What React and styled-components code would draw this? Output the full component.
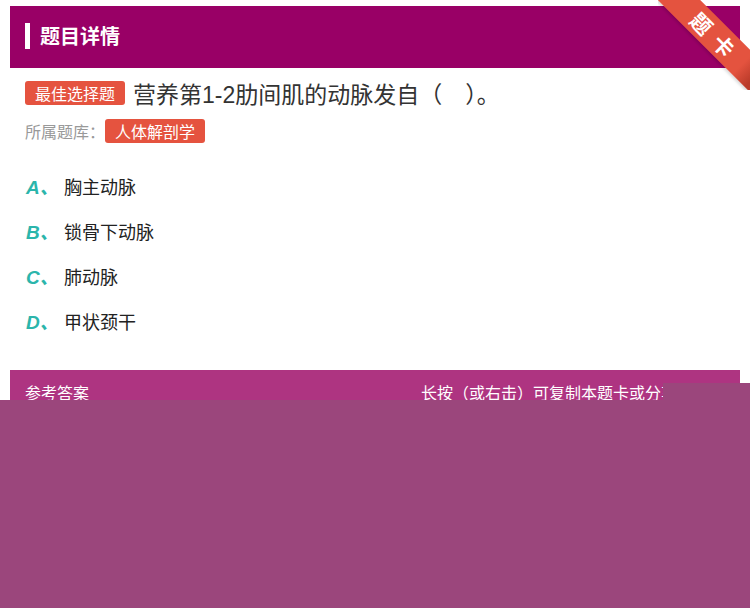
import styled, { createGlobalStyle } from "styled-components";

const GlobalStyle = createGlobalStyle`
  html, body {
    margin: 0;
    padding: 0;
    background: #fff;
  }
  body {
    font-family: "Liberation Sans", "Noto Sans CJK SC", sans-serif;
    color: #333;
  }
`;

const Page = styled.div`
  position: relative;
  width: 750px;
  height: 608px;
  overflow: hidden;
  padding: 6px 10px 0;
  box-sizing: border-box;
`;

const Header = styled.div`
  height: 62px;
  box-sizing: border-box;
  padding: 0 0 3px 15px;
  background: #990066;
  display: flex;
  align-items: center;
  & > h1 {
    margin: 0;
    font-size: 20px;
    font-weight: bold;
    color: #fff;
  }
`;

const Marker = styled.span`
  width: 5px;
  height: 26px;
  background: #fff;
  margin-right: 10px;
`;

const Ribbon = styled.div`
  position: absolute;
  top: 0;
  right: 0;
  width: 92px;
  height: 90px;
  overflow: hidden;
`;

const Band = styled.div`
  position: absolute;
  left: -20px;
  top: 19px;
  width: 150px;
  height: 30px;
  background: linear-gradient(to right, #e4533f 0%, #e4533f 78%, #b93a29 90%);
  transform: rotate(45deg);
  display: flex;
  align-items: center;
  justify-content: center;
  gap: 10px;
  color: #fff;
  font-size: 21px;
  font-weight: bold;
  box-shadow: 0 2px 3px rgba(0, 0, 0, 0.15);
`;

const Content = styled.div`
  padding: 0 15px;
`;

const QuestionRow = styled.div`
  display: flex;
  align-items: center;
  margin-top: 11px;
  height: 28px;
`;

const Tag = styled.span`
  display: inline-flex;
  align-items: center;
  height: 24px;
  padding: 0 10px;
  background: #e5533f;
  border-radius: 3px;
  color: #fff;
  font-size: 16px;
`;

const Question = styled.span`
  margin-left: 8px;
  font-size: 23px;
  color: #333;
`;

const LibraryRow = styled.div`
  display: flex;
  align-items: center;
  margin-top: 12px;
  font-size: 16px;
  color: #999;
`;

const Options = styled.div`
  margin-top: 20px;
`;

const Option = styled.div`
  display: flex;
  align-items: center;
  height: 45px;
`;

const Letter = styled.span`
  width: 38px;
  padding-left: 1px;
  color: #2bb5ab;
  font-size: 19px;
  font-weight: bold;
  font-style: italic;
`;

const OptionText = styled.span`
  font-size: 18px;
  color: #222;
`;

const AnswerBar = styled.div`
  margin-top: 27px;
  height: 44px;
  background: #ae3481;
  display: flex;
  align-items: center;
  justify-content: space-between;
  padding: 0 15px;
  color: #fff;
  font-size: 16px;
`;

const Shade = styled.div`
  position: absolute;
  left: 0;
  top: 400px;
  width: 750px;
  height: 208px;
  background: #9b467c;
  &::before {
    content: "";
    position: absolute;
    right: 0;
    top: -17px;
    width: 87px;
    height: 17px;
    background: #9b467c;
  }
`;

const options = [
  ["A", "胸主动脉"],
  ["B", "锁骨下动脉"],
  ["C", "肺动脉"],
  ["D", "甲状颈干"],
];

export default function App() {
  return (
    <>
      <GlobalStyle />
      <Page>
        <Header>
          <Marker />
          <h1>题目详情</h1>
        </Header>
        <Content>
          <QuestionRow>
            <Tag>最佳选择题</Tag>
            <Question>营养第1-2肋间肌的动脉发自（　）。</Question>
          </QuestionRow>
          <LibraryRow>
            所属题库：<Tag>人体解剖学</Tag>
          </LibraryRow>
          <Options>
            {options.map(([key, text]) => (
              <Option key={key}>
                <Letter>{key}、</Letter>
                <OptionText>{text}</OptionText>
              </Option>
            ))}
          </Options>
        </Content>
        <AnswerBar>
          <span>参考答案</span>
          <span>长按（或右击）可复制本题卡或分享给好友</span>
        </AnswerBar>
        <Ribbon>
          <Band>
            <span>题</span>
            <span>卡</span>
          </Band>
        </Ribbon>
        <Shade />
      </Page>
    </>
  );
}
